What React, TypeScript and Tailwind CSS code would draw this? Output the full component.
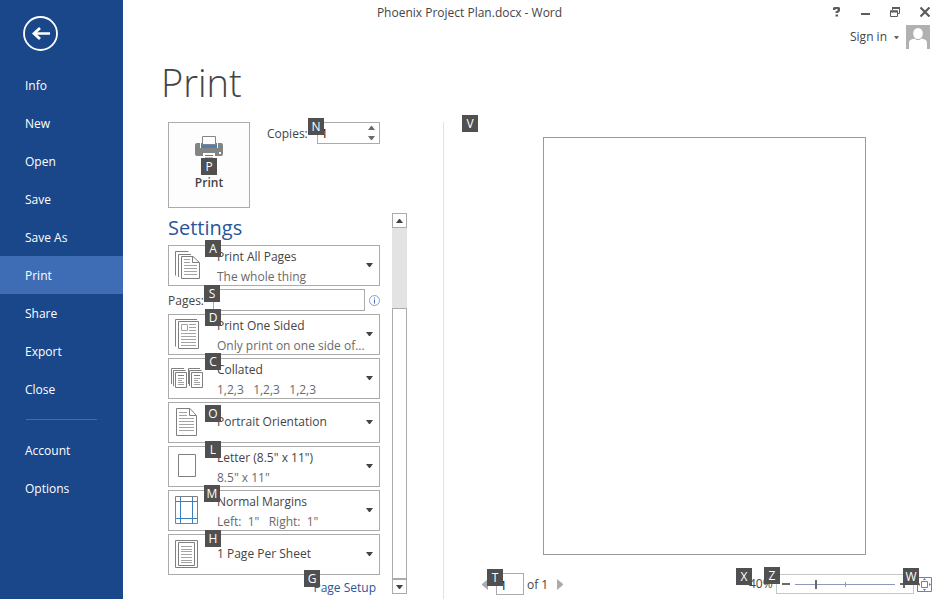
import type { ReactNode } from 'react';

const mainNav = ['Info', 'New', 'Open', 'Save', 'Save As', 'Print', 'Share', 'Export', 'Close'];
const accountNav = ['Account', 'Options'];

function KeyTip({ children, place }: { children: string; place: string }) {
  return (
    <kbd
      className={`pointer-events-none absolute z-10 flex h-[17px] w-4 items-center justify-center bg-[#505050] font-[inherit] text-xs leading-4 text-white ${place}`}
    >
      {children}
    </kbd>
  );
}

function NavItem({ label }: { label: string }) {
  const active = label === 'Print';
  return (
    <li>
      <button
        type="button"
        aria-current={active ? 'page' : undefined}
        className={`block h-[38px] w-full pt-[2px] pl-[25px] text-left ${active ? 'bg-[#3e6db5]' : ''}`}
      >
        {label}
      </button>
    </li>
  );
}

function Glyph({ children }: { children: ReactNode }) {
  return (
    <svg width="48" height="39" viewBox="0 0 48 39" fill="none" stroke="#7f7f7f" className="shrink-0" aria-hidden="true">
      {children}
    </svg>
  );
}

const AllPagesIcon = (
  <Glyph>
    <path d="M6.500 29.500V5.500H19.500M9.500 31V8.500H22" />
    <path d="M12.500 10.500H24L30.500 16.500V32.500H12.500ZM23.500 10.500V16.500H30" fill="#fff" />
    <path d="M15 13.500H21M15 16.500H21M15 19.500H28M15 22.500H28M15 25.500H28M15 28.500H28" stroke="#a3a3a3" />
  </Glyph>
);

const OneSidedIcon = (
  <Glyph>
    <path d="M6.500 31.500V4.500H28" />
    <path d="M9.500 6.500H29.500V33.500H9.500Z" />
    <path d="M12.500 9.500H18.500V15.500H12.500ZM20 9.500H27M20 12.500H27M20 15.500H27M12 18.500H27M12 21.500H27M12 24.500H27M12 27.500H27M12 30.500H27" stroke="#a3a3a3" />
  </Glyph>
);

const CollatedIcon = (
  <Glyph>
    <path d="M2.500 25V9.500H15M4.500 27V11.500H16.500M6.500 13.500H17.500V28.500H6.500Z" />
    <path d="M19.500 25V9.500H31M20.500 27V11.500H32.500M22.500 13.500H33.500V28.500H22.500Z" />
    <path d="M9 16.500H15M25 16.500H31" />
    <path d="M9 19.500H15M9 21.500H13M9 23.500H15M9 25.500H15M25 19.500H31M25 21.500H29M25 23.500H31M25 25.500H31" stroke="#a3a3a3" />
  </Glyph>
);

const PortraitIcon = (
  <Glyph>
    <path d="M7.500 5.500H21L27.500 12.500V32.500H7.500ZM20.500 5.500V12.500H27" />
    <path d="M10 9.500H18M10 12.500H18M10 15.500H25M10 18.500H25M10 21.500H25M10 24.500H25M10 27.500H25" stroke="#a3a3a3" />
  </Glyph>
);

const LetterIcon = (
  <Glyph>
    <path d="M9.500 7.500H26.500V29.500H9.500Z" />
  </Glyph>
);

const MarginsIcon = (
  <Glyph>
    <path d="M11.500 5V32M23.500 5V32M6 10.500H28M6 27.500H28" stroke="#3d7ebf" />
    <path d="M6.500 5.500H28.500V32.500H6.500Z" />
  </Glyph>
);

const SheetIcon = (
  <Glyph>
    <path d="M6.500 5.500H28.500V32.500H6.500ZM9.500 7.500H25.500V30.500H9.500Z" />
    <path d="M12 11.500H23M12 14.500H23M12 16.500H23M12 19.500H23M12 22.500H23M12 25.500H23M12 27.500H23" stroke="#a3a3a3" />
  </Glyph>
);

function Caret({ up = false, className = '' }: { up?: boolean; className?: string }) {
  return (
    <svg width="7" height="4" viewBox="0 0 7 4" fill="currentColor" className={`shrink-0 ${className}`} aria-hidden="true">
      <path d={up ? 'M0 4H7L4 0H3Z' : 'M0 0H7L4 4H3Z'} />
    </svg>
  );
}

function Setting({ icon, title, detail, tip, tipPlace }: { icon: ReactNode; title: string; detail?: string; tip: string; tipPlace: string }) {
  return (
    <div className="relative">
      <button type="button" aria-haspopup="listbox" className="flex h-[41px] w-full items-center border border-[#ababab] bg-white text-left">
        {icon}
        <span className="min-w-0 flex-1 whitespace-pre pt-[2px] leading-5">
          <span className={`block ${detail ? '' : 'pb-1'}`}>{title}</span>
          {detail && <span className="block text-[#6a6a6a]">{detail}</span>}
        </span>
        <Caret className="mr-[6px] mb-[2px]" />
      </button>
      <KeyTip place={tipPlace}>{tip}</KeyTip>
    </div>
  );
}

function Sidebar() {
  return (
    <aside className="w-[123px] shrink-0 bg-[#19478a] text-white">
      <button type="button" aria-label="Back" className="mt-4 mb-[15px] ml-[23px] block">
        <svg width="35" height="35" viewBox="0 0 35 35" fill="none" stroke="#fff" aria-hidden="true">
          <circle cx="17.500" cy="17.500" r="16.500" strokeWidth="1.800" />
          <path d="M27 17.500H11" strokeWidth="2.500" />
          <path d="M17 12L11 17.500L17 23" strokeWidth="2.800" />
        </svg>
      </button>
      <nav aria-label="File">
        <ul>
          {mainNav.map((label) => (
            <NavItem key={label} label={label} />
          ))}
        </ul>
        <hr className="mt-[11px] mr-[26px] mb-[11px] ml-[26px] border-[#3e6db5]" />
        <ul>
          {accountNav.map((label) => (
            <NavItem key={label} label={label} />
          ))}
        </ul>
      </nav>
    </aside>
  );
}

function WindowHeader() {
  return (
    <header>
      <div className="flex h-[25px] items-center">
        <p className="flex-1 pt-px text-center">Phoenix Project Plan.docx - Word</p>
        <div className="flex w-[124px] items-center justify-end gap-5 pr-[10px] pb-[2px] text-[#5c5c5c]">
          <button type="button" aria-label="Help">
            <svg width="8" height="10" viewBox="0 0 8 10" fill="currentColor">
              <path d="M0 1L1 0H6L7 1V4L5 6H2.500V4.500L4.500 3.500V2H2.500V3H0ZM2.500 7.500H5V9.500H2.500Z" />
            </svg>
          </button>
          <button type="button" aria-label="Minimize">
            <svg width="9" height="10" viewBox="0 0 9 10" fill="currentColor">
              <path d="M0 6H9V8H0Z" />
            </svg>
          </button>
          <button type="button" aria-label="Restore">
            <svg width="10" height="10" viewBox="0 0 10 10" fill="none" stroke="currentColor">
              <path d="M2.500 3V.5H9.500V6.500H8M.5 4H7.500V9.500H.5Z" />
              <path d="M2 1H10M0 4.500H8" strokeWidth="2" />
            </svg>
          </button>
          <button type="button" aria-label="Close">
            <svg width="10" height="10" viewBox="0 0 10 10" fill="none" stroke="currentColor" strokeWidth="2.200">
              <path d="M.5 .5L9.500 9.500M9.500 .5L.5 9.500" />
            </svg>
          </button>
        </div>
      </div>
      <div className="flex justify-end pr-[10px]">
        <button type="button" className="flex items-center">
          Sign in
          <svg width="5" height="3" viewBox="0 0 5 3" fill="#6a6a6a" className="mx-[7px]" aria-hidden="true">
            <path d="M0 0H5L3 3H2Z" />
          </svg>
          <svg width="24" height="24" viewBox="0 0 24 24" aria-hidden="true">
            <path d="M0 0H24V24H0Z" fill="#b1b1b1" />
            <ellipse cx="12" cy="8.500" rx="4.800" ry="5.500" fill="#fff" />
            <path d="M3 24V18Q3 14.500 7 14L8.500 13.500Q12 17 15.500 13.500L17 14Q21 14.500 21 18V24Z" fill="#fff" />
          </svg>
        </button>
      </div>
      <h1 className="pt-[9px] pb-4 pl-[38px] text-[38px] leading-[48px] font-light text-[#444]">Print</h1>
    </header>
  );
}

function PrintControls() {
  return (
    <div className="mb-[5px] flex items-start">
      <div className="relative">
        <button type="button" className="flex h-[86px] w-[82px] flex-col items-center border border-[#ababab] bg-[#fdfdfd] pt-[13px] font-semibold">
          <svg width="28" height="37" viewBox="0 0 28 37" aria-hidden="true">
            <path d="M2 7H26Q28 7 28 9V18Q28 20 26 20H2Q0 20 0 18V9Q0 7 2 7Z" fill="#848484" />
            <path d="M5 7H23V12H5Z" fill="#fff" />
            <path d="M6 7H22V12H6Z" fill="#4a7fb8" />
            <path d="M7.500.5H20.500V8.500H7.500Z" fill="#fff" stroke="#848484" />
            <path d="M24 16H26V18H24Z" fill="#fff" />
            <path d="M8 17H20V25H8Z" fill="#fff" />
            <path d="M10 19.500H18M10 22H18" stroke="#4a7fb8" />
          </svg>
          <span className="leading-5">Print</span>
        </button>
        <KeyTip place="left-[33px] top-[36px]">P</KeyTip>
      </div>
      <div className="relative ml-[17px] flex h-[22px] items-center">
        <label htmlFor="copies" className="w-[50px] pt-[2px]">
          Copies:
        </label>
        <div className="flex h-full w-[63px] border border-[#ababab]">
          <input id="copies" inputMode="numeric" defaultValue="1" className="w-full min-w-0 flex-1 pt-[2px] pl-[3px] text-black outline-none" />
          <div className="flex w-4 flex-col items-center justify-between py-[3px] text-[#6a6a6a]">
            <button type="button" aria-label="More copies">
              <Caret up className="block" />
            </button>
            <button type="button" aria-label="Fewer copies">
              <Caret className="block" />
            </button>
          </div>
        </div>
        <KeyTip place="left-[41px] -top-1">N</KeyTip>
      </div>
    </div>
  );
}

function ScrollBar() {
  return (
    <div className="flex h-[381px] w-[15px] flex-col bg-[#e3e3e3]">
      <button type="button" aria-label="Scroll up" className="flex h-[15px] shrink-0 items-center justify-center border border-[#ababab] bg-white">
        <Caret up />
      </button>
      <div className="mt-20 flex-1 border border-[#ababab] bg-white" />
      <button type="button" aria-label="Scroll down" className="flex h-[15px] shrink-0 items-center justify-center border border-[#ababab] bg-white">
        <Caret />
      </button>
    </div>
  );
}

function Settings() {
  return (
    <div className="flex gap-3">
      <section className="w-[212px]">
        <h2 className="h-8 text-xl leading-[30px] text-[#2a5699]">Settings</h2>
        <div className="flex flex-col gap-[3px]">
          <Setting icon={AllPagesIcon} title="Print All Pages" detail="The whole thing" tip="A" tipPlace="left-[37px] -top-[5px]" />
          <div className="relative flex h-[22px] items-center">
            <label htmlFor="pages" className="w-[45px] pt-[2px]">
              Pages:
            </label>
            <input id="pages" className="h-full min-w-0 flex-1 border border-[#ababab] px-1 outline-none" />
            <button type="button" aria-label="Page range help" className="ml-1">
              <svg width="11" height="11" viewBox="0 0 11 11" fill="none" stroke="#7fa3d6" className="block">
                <circle cx="5.500" cy="5.500" r="5" />
                <path d="M5.500 2.500V3.500M5.500 4.500V8.500" stroke="#3d6fb5" />
              </svg>
            </button>
            <KeyTip place="left-9 -top-1">S</KeyTip>
          </div>
          <Setting icon={OneSidedIcon} title="Print One Sided" detail="Only print on one side of..." tip="D" tipPlace="left-[37px] -top-[5px]" />
          <Setting icon={CollatedIcon} title="Collated" detail="1,2,3   1,2,3   1,2,3" tip="C" tipPlace="left-[37px] -top-[5px]" />
          <Setting icon={PortraitIcon} title="Portrait Orientation" tip="O" tipPlace="left-[37px] top-[3px]" />
          <Setting icon={LetterIcon} title={'Letter (8.5" x 11")'} detail={'8.5" x 11"'} tip="L" tipPlace="left-[37px] -top-[5px]" />
          <Setting icon={MarginsIcon} title="Normal Margins" detail={'Left:  1"   Right:  1"'} tip="M" tipPlace="left-9 -top-[5px]" />
          <Setting icon={SheetIcon} title="1 Page Per Sheet" tip="H" tipPlace="left-[37px] -top-1" />
        </div>
        <div className="relative flex h-6 items-center justify-end pt-[2px] pr-1">
          <a href="#page-setup" className="text-[#2a5699]">
            Page Setup
          </a>
          <KeyTip place="left-[136px] -top-[5px]">G</KeyTip>
        </div>
      </section>
      <ScrollBar />
    </div>
  );
}

function Preview() {
  return (
    <section aria-label="Preview" className="relative flex min-w-0 flex-1 flex-col pt-[15px]">
      <KeyTip place="left-[18px] -top-[7px]">V</KeyTip>
      <div className="flex justify-center pl-[25px]">
        <div className="aspect-[323/418] w-[323px] border border-[#9a9a9a] bg-white" />
      </div>
      <footer className="mt-[18px] flex h-[22px] items-center justify-between pr-2 pl-[38px]">
        <div className="relative flex h-full items-center">
          <button type="button" aria-label="Previous page">
            <svg width="6" height="11" viewBox="0 0 6 11" fill="#ababab">
              <path d="M6 0V11L0 6V5Z" />
            </svg>
          </button>
          <input aria-label="Current page" defaultValue="1" className="ml-2 h-full w-7 border border-[#ababab] pt-[2px] pl-[3px] text-black outline-none" />
          <span className="w-[33px] pt-[2px] pl-[3px]">of 1</span>
          <button type="button" aria-label="Next page">
            <svg width="6" height="11" viewBox="0 0 6 11" fill="#ababab">
              <path d="M0 0V11L6 6V5Z" />
            </svg>
          </button>
          <KeyTip place="left-[5px] -top-1">T</KeyTip>
        </div>
        <div className="relative flex h-full items-center">
          <button type="button" className="w-[27px] text-left">
            40%
          </button>
          <div className="flex h-5 w-[138px] items-center border border-[#c6c6c6] px-[5px] text-[#6a6a6a]">
            <button type="button" aria-label="Zoom out">
              <svg width="8" height="8" viewBox="0 0 8 8" fill="currentColor">
                <path d="M0 3H8V5H0Z" />
              </svg>
            </button>
            <div className="relative mx-[5px] flex w-[100px] items-center">
              <input
                type="range"
                aria-label="Zoom"
                min={0}
                max={100}
                defaultValue={20}
                className="h-[9px] w-full appearance-none bg-linear-to-b from-[#8a9bb8] to-[#8a9bb8] bg-[length:100%_1px] bg-center bg-no-repeat [&::-webkit-slider-thumb]:h-[9px] [&::-webkit-slider-thumb]:w-[2px] [&::-webkit-slider-thumb]:appearance-none [&::-webkit-slider-thumb]:bg-[#6a6a6a]"
              />
              <span className="pointer-events-none absolute inset-y-0 left-1/2 my-auto h-[5px] w-px bg-[#8a9bb8]" />
            </div>
            <button type="button" aria-label="Zoom in">
              <svg width="8" height="8" viewBox="0 0 8 8" fill="currentColor">
                <path d="M0 3H8V5H0ZM3 0H5V8H3Z" />
              </svg>
            </button>
          </div>
          <button type="button" aria-label="Zoom to page" className="ml-[3px]">
            <svg width="15" height="15" viewBox="0 0 15 15" fill="none" stroke="#7f7f7f">
              <path d="M.5.5H14.500V14.500H.5ZM4.500 4.500H10.500V10.500H4.500Z" />
              <path d="M6 3L7.500 1L9 3ZM6 12L7.500 14L9 12ZM12 6L14 7.500L12 9ZM3 6L1 7.500L3 9Z" fill="#3d7ebf" stroke="none" />
            </svg>
          </button>
          <KeyTip place="-left-[13px] -top-[5px]">X</KeyTip>
          <KeyTip place="left-[15px] -top-[6px]">Z</KeyTip>
          <KeyTip place="left-[154px] -top-[5px]">W</KeyTip>
        </div>
      </footer>
    </section>
  );
}

export default function App() {
  return (
    <div className="flex min-h-screen bg-white font-['Open_Sans','Noto_Sans',sans-serif] text-xs text-[#444]">
      <Sidebar />
      <main className="flex min-w-0 flex-1 flex-col">
        <WindowHeader />
        <div className="flex flex-1 pb-[2px]">
          <div className="w-[321px] shrink-0 border-r border-[#e1e1e1] pl-[45px]">
            <PrintControls />
            <Settings />
          </div>
          <Preview />
        </div>
      </main>
    </div>
  );
}
